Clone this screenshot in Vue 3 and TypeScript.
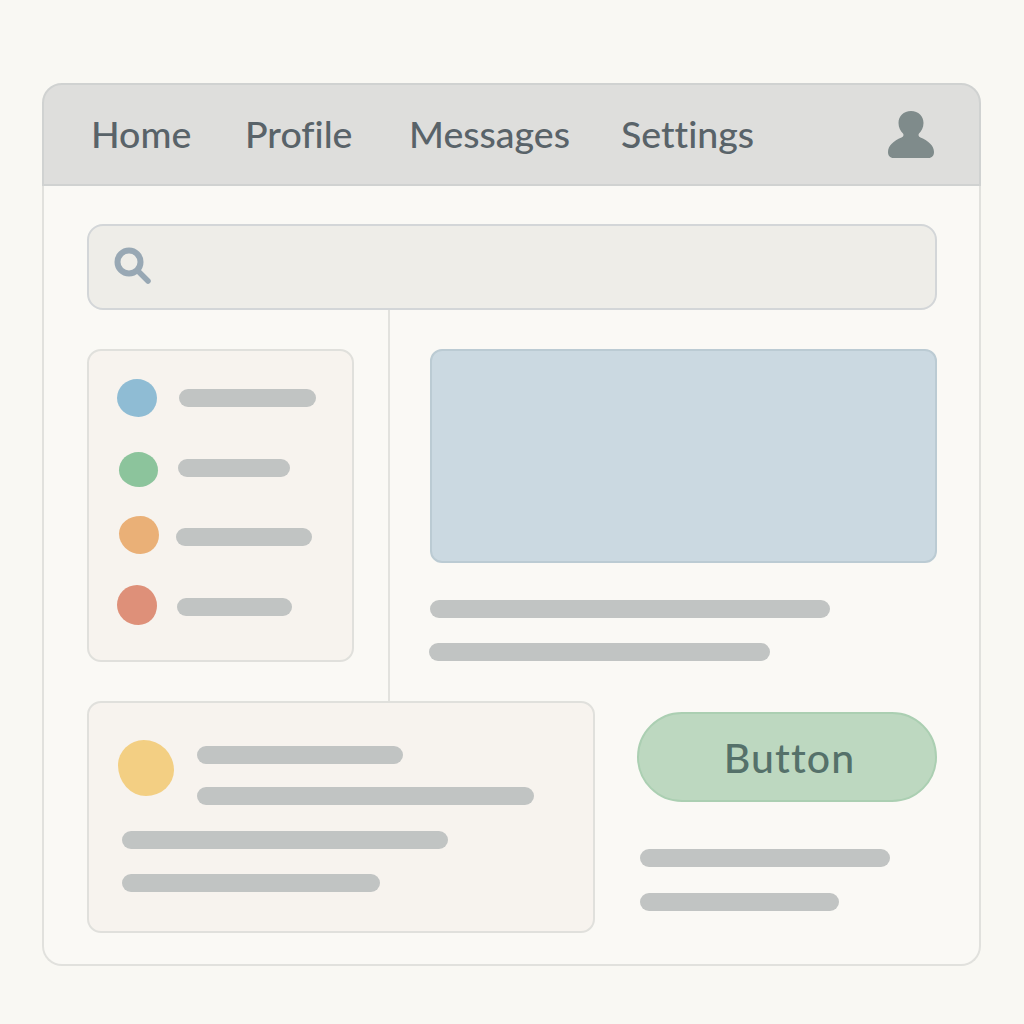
<template>
  <div class="page">
    <div class="window">
      <header class="topbar">
        <nav class="nav">
          <a v-for="item in navItems" :key="item" class="nav-item">{{ item }}</a>
        </nav>
        <svg class="user-icon" viewBox="0 0 46 47" aria-hidden="true">
          <path d="M23 0c7.500 0 12.500 5 12.500 12 0 4.500-2 8-4.500 10.500-1 1.500-.5 3 1.500 4 8 3.500 13.500 8 13.500 14.500 0 3.500-2 6-5.500 6H5.500C2 47 0 44.500 0 41c0-6.500 5.500-11 13.500-14.500 2-1 2.500-2.500 1.500-4C12.500 20 10.500 16.500 10.500 12 10.500 5 15.500 0 23 0z" />
        </svg>
      </header>

      <div class="content">
        <div class="search">
          <svg class="search-icon" viewBox="0 0 38 38" aria-hidden="true">
            <circle cx="15" cy="15" r="11.500" />
            <path class="handle" d="M24 24l10 10" />
          </svg>
        </div>

        <div class="middle">
          <aside class="side-col">
            <div class="list-card">
              <div v-for="row in listRows" :key="row.color" class="list-row">
                <span class="dot" :style="dotStyle(row)"></span>
                <span class="bar" :style="{ width: row.bar + 'px', marginLeft: row.gap + 'px' }"></span>
              </div>
            </div>
          </aside>
          <section class="main-col">
            <div class="hero"></div>
            <div class="bar hero-line-1"></div>
            <div class="bar hero-line-2"></div>
          </section>
        </div>

        <div class="bottom">
          <div class="note-card">
            <div class="note-head">
              <span class="note-dot"></span>
              <div class="note-lines">
                <div class="bar note-a"></div>
                <div class="bar note-b"></div>
              </div>
            </div>
            <div class="bar note-c"></div>
            <div class="bar note-d"></div>
          </div>
          <div class="action-col">
            <button class="action-btn">Button</button>
            <div class="bar action-a"></div>
            <div class="bar action-b"></div>
          </div>
        </div>
      </div>
    </div>
  </div>
</template>

<script setup lang="ts">
interface ListRow {
  color: string
  w: number
  h: number
  radius: string
  left: number
  lift: number
  gap: number
  bar: number
}

const navItems = ['Home', 'Profile', 'Messages', 'Settings']

// dots are a little uneven in the mockup, so each gets its own size and radius
const listRows: ListRow[] = [
  { color: '#8fbcd4', w: 40, h: 38, radius: '50% 50% 46% 54% / 50% 50% 50% 50%', left: 0, lift: 0, gap: 22, bar: 137 },
  { color: '#8cc49c', w: 39, h: 35, radius: '50% 50% 48% 52% / 52% 52% 48% 48%', left: 2, lift: -3, gap: 20, bar: 112 },
  { color: '#eab077', w: 40, h: 38, radius: '54% 46% 46% 54% / 46% 50% 50% 54%', left: 2, lift: 4, gap: 17, bar: 136 },
  { color: '#de9079', w: 40, h: 40, radius: '50% 50% 46% 54% / 50% 52% 48% 50%', left: 0, lift: 3, gap: 20, bar: 115 }
]

const dotStyle = (row: ListRow) => ({
  width: row.w + 'px',
  height: row.h + 'px',
  background: row.color,
  borderRadius: row.radius,
  marginLeft: row.left + 'px',
  marginBottom: row.lift + 'px'
})
</script>

<style>
html,
body {
  margin: 0;
  background: #f9f8f3;
}
</style>

<style scoped>
.page {
  width: 1024px;
  height: 1024px;
  box-sizing: border-box;
  padding: 83px 0 0 42px;
  background: #f9f8f3;
  font-family: Lato, "Liberation Sans", sans-serif;
}

.window {
  width: 939px;
}

.topbar {
  display: flex;
  align-items: center;
  justify-content: space-between;
  height: 103px;
  box-sizing: border-box;
  padding: 0 45px 0 47px;
  background: #dededc;
  border: 2px solid #d0d2d1;
  border-radius: 20px 20px 0 0;
}

.nav {
  display: grid;
  grid-template-columns: 154px 164px 212px auto;
  padding-bottom: 2px;
}

.nav-item {
  font-size: 37.5px;
  font-weight: 500;
  font-variant-ligatures: none;
  line-height: 44px;
  color: #596369;
}

.user-icon {
  width: 46px;
  height: 47px;
  fill: #7f8b8b;
}

.content {
  height: 780px;
  box-sizing: border-box;
  padding: 38px 42px 0 43px;
  background: #faf9f5;
  border: 2px solid #e1e1dd;
  border-top: 0;
  border-radius: 0 0 20px 20px;
}

.search {
  display: flex;
  align-items: center;
  height: 86px;
  box-sizing: border-box;
  padding-left: 25px;
  background: #eeede8;
  border: 2px solid #d3d6d8;
  border-radius: 16px;
}

.search-icon {
  width: 38px;
  height: 38px;
  margin-bottom: 3px;
  fill: none;
  stroke: #98a8b4;
  stroke-width: 6;
  stroke-linecap: round;
}

.handle {
  stroke-width: 5.5;
}

.middle {
  display: flex;
  height: 391px;
}

.side-col {
  width: 303px;
  box-sizing: border-box;
  padding: 39px 34px 0 0;
  border-right: 2px solid #e2e2de;
}

.list-card {
  display: flex;
  flex-direction: column;
  gap: 29.5px;
  height: 313px;
  box-sizing: border-box;
  padding: 27px 20px 0 28px;
  background: #f7f3ee;
  border: 2px solid #e0e0dc;
  border-radius: 14px;
}

.list-row {
  display: flex;
  align-items: center;
  height: 40px;
}

.dot {
  flex: none;
}

.bar {
  display: block;
  flex: none;
  height: 18px;
  border-radius: 9px;
  background: #c1c4c3;
}

.main-col {
  flex: 1;
  padding: 39px 0 0 40px;
}

.hero {
  height: 214px;
  box-sizing: border-box;
  background: #cbd9e1;
  border: 2px solid #bbcbd3;
  border-radius: 12px;
}

.hero-line-1 {
  width: 400px;
  margin-top: 37px;
}

.hero-line-2 {
  width: 341px;
  margin-top: 25px;
  margin-left: -1px;
}

.bottom {
  display: flex;
  gap: 42px;
}

.note-card {
  width: 509px;
  height: 232px;
  box-sizing: border-box;
  padding: 37px 32px 0 33px;
  background: #f7f3ee;
  border: 2px solid #e0e0dc;
  border-radius: 14px;
}

.note-head {
  display: flex;
  gap: 23px;
}

.note-dot {
  flex: none;
  width: 56px;
  height: 56px;
  margin-left: -4px;
  background: #f3cf83;
  border-radius: 46% 54% 50% 50% / 45% 54% 46% 55%;
}

.note-lines {
  padding-top: 6px;
}

.note-a {
  width: 206px;
}

.note-b {
  width: 337px;
  margin-top: 23px;
}

.note-c {
  width: 326px;
  margin-top: 26px;
}

.note-d {
  width: 258px;
  margin-top: 25px;
}

.action-col {
  padding-top: 11px;
}

.action-btn {
  display: block;
  width: 300px;
  height: 90px;
  padding: 0 0 0 5px;
  background: #bdd8c0;
  border: 2px solid #abcfb2;
  border-radius: 45px;
  color: #55716a;
  font-family: inherit;
  font-size: 41px;
  font-weight: 500;
  letter-spacing: 1.1px;
}

.action-a {
  width: 250px;
  margin: 47px 0 0 3px;
}

.action-b {
  width: 199px;
  margin: 26px 0 0 3px;
}
</style>
